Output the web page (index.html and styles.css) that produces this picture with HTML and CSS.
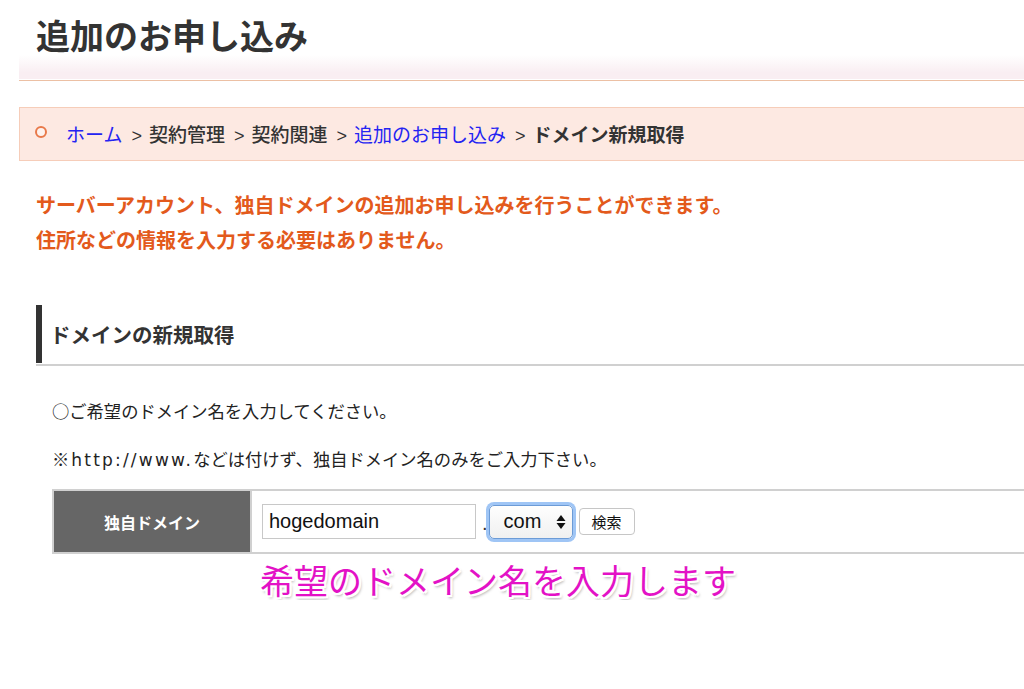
FILE: index.html
```html
<!DOCTYPE html>
<html lang="ja">
<head>
<meta charset="utf-8">
<title>追加のお申し込み</title>
<link rel="stylesheet" href="styles.css">
</head>
<body>
<div class="page">
  <h1 class="title">追加のお申し込み</h1>
  <div class="band"></div>

  <nav class="breadcrumb">
    <span class="bullet"></span>
    <a class="crumb-link" href="#">ホーム</a>
    <span class="sep">&gt;</span>
    <span class="crumb">契約管理</span>
    <span class="sep">&gt;</span>
    <span class="crumb">契約関連</span>
    <span class="sep">&gt;</span>
    <a class="crumb-link" href="#">追加のお申し込み</a>
    <span class="sep">&gt;</span>
    <span class="crumb current">ドメイン新規取得</span>
  </nav>

  <p class="lead">サーバーアカウント、独自ドメインの追加お申し込みを行うことができます。<br>住所などの情報を入力する必要はありません。</p>

  <section class="section">
    <div class="section-head">
      <h2 class="section-title">ドメインの新規取得</h2>
    </div>
    <div class="section-body">
      <p class="note">○ご希望のドメイン名を入力してください。</p>
      <p class="note note-second">※<span class="latin">http://www.</span>などは付けず、独自ドメイン名のみをご入力下さい。</p>

      <div class="domain-row">
        <div class="domain-label">独自ドメイン</div>
        <div class="domain-field">
          <input class="domain-input" type="text" value="hogedomain">
          <span class="dot">.</span>
          <div class="select">
            <span class="select-text">com</span>
            <svg class="select-arrows" width="10" height="16" viewBox="0 0 10 16">
              <path d="M5 1 L9.5 7 H0.5 Z" fill="#111"/>
              <path d="M5 15 L9.5 9 H0.5 Z" fill="#111"/>
            </svg>
          </div>
          <button class="search-btn" type="button">検索</button>
        </div>
      </div>

      <p class="annotation">希望のドメイン名を入力します</p>
    </div>
  </section>
</div>
</body>
</html>
```

FILE: styles.css
```css
html, body {
  margin: 0;
  padding: 0;
  background: #ffffff;
  overflow: hidden;
}

body {
  font-family: "Noto Sans CJK JP", "Noto Sans", sans-serif;
  color: #333333;
}

.page {
  padding-left: 19px;
}

.title {
  margin: 0;
  padding: 15px 0 0 17px;
  font-size: 34px;
  line-height: 40px;
  font-weight: 700;
  color: #333333;
}

.band {
  height: 25px;
  background: linear-gradient(to bottom, #ffffff 0%, #f9eef2 70%, #f9eef2 100%);
  border-bottom: 1px solid #ecc0a4;
  box-shadow: inset 0 -1px 0 #ffffff;
}

.breadcrumb {
  margin-top: 26px;
  height: 52px;
  display: flex;
  align-items: center;
  background: #fde9e2;
  border: 1px solid #f6cdb9;
  border-right: none;
  padding-left: 15px;
  font-size: 19px;
  line-height: 24px;
}

.bullet {
  width: 8px;
  height: 8px;
  border: 2px solid #e8794a;
  border-radius: 50%;
  background: #fdf2ee;
  margin-right: 19px;
  margin-top: -4px;
}

.crumb-link {
  color: #2424f2;
  text-decoration: none;
}

.crumb {
  color: #333333;
  font-weight: 500;
}

.crumb.current {
  font-weight: 700;
}

.sep {
  color: #333333;
  font-family: "Liberation Sans", Arial, sans-serif;
  font-size: 18px;
  margin: 4px 7px 0 9px;
}

.lead {
  margin: 26px 0 0 17px;
  font-size: 20px;
  line-height: 35px;
  font-weight: 700;
  color: #e35a1c;
}

.section {
  margin: 48px 0 0 17px;
}

.section-head {
  padding-bottom: 1px;
  border-bottom: 2px solid #d0d0d0;
}

.section-title {
  margin: 0;
  height: 58px;
  display: flex;
  align-items: center;
  border-left: 6px solid #333333;
  padding-left: 8px;
  font-size: 20.5px;
  font-weight: 700;
  color: #333333;
}

.section-body {
  padding-left: 16px;
}

.note {
  margin: 33px 0 0 0;
  height: 24px;
  font-size: 17.3px;
  line-height: 24px;
  color: #222222;
}

.note-second {
  margin-top: 24px;
}

.latin {
  font-family: "DejaVu Sans", "Liberation Sans", sans-serif;
  font-size: 17px;
  line-height: 1;
  letter-spacing: 2.2px;
  margin-left: 2px;
}

.domain-row {
  margin-top: 18px;
  display: flex;
  height: 61px;
  border-top: 2px solid #d0d0d0;
  border-bottom: 2px solid #d0d0d0;
  border-left: 2px solid #d0d0d0;
}

.domain-label {
  width: 196px;
  background: #666666;
  color: #ffffff;
  font-weight: 700;
  font-size: 16px;
  display: flex;
  align-items: center;
  justify-content: center;
  border-right: 2px solid #d0d0d0;
}

.domain-field {
  flex: 1;
  display: flex;
  align-items: center;
  padding-left: 10px;
}

.domain-input {
  box-sizing: border-box;
  width: 214px;
  height: 35px;
  margin: 0;
  border: 1px solid #c8c8c8;
  padding: 0 6px;
  font-family: "Liberation Sans", Arial, sans-serif;
  font-size: 20px;
  color: #111111;
  background: #ffffff;
}

.dot {
  font-family: "Liberation Sans", Arial, sans-serif;
  font-size: 20px;
  color: #333333;
  margin: 4px 1px 0 6px;
}

.select {
  box-sizing: border-box;
  width: 84px;
  height: 34px;
  display: flex;
  align-items: center;
  justify-content: space-between;
  padding: 0 6px 0 14px;
  border: 1px solid #6c9bd6;
  border-radius: 5px;
  background: linear-gradient(to bottom, #fefefe, #f0f0f0);
  box-shadow: 0 0 0 3px #9fc5f5;
  font-family: "Liberation Sans", Arial, sans-serif;
  font-size: 20px;
  color: #111111;
}

.select-arrows {
  display: block;
}

.search-btn {
  box-sizing: border-box;
  margin-left: 6px;
  width: 56px;
  height: 27px;
  border: 1px solid #c6c6c6;
  border-radius: 4px;
  background: #ffffff;
  font-family: "Noto Sans CJK JP", sans-serif;
  font-size: 15px;
  color: #111111;
  padding: 0;
}

.annotation {
  margin: 6px 0 0 208px;
  font-size: 34px;
  line-height: 40px;
  font-weight: 400;
  color: #e312c6;
  text-shadow:
    -2px -2px 0 #fff, 2px -2px 0 #fff, -2px 2px 0 #fff, 2px 2px 0 #fff,
    0 -2px 0 #fff, 0 2px 0 #fff, -2px 0 0 #fff, 2px 0 0 #fff,
    2px 3px 3px rgba(0, 0, 0, 0.35);
}
```
